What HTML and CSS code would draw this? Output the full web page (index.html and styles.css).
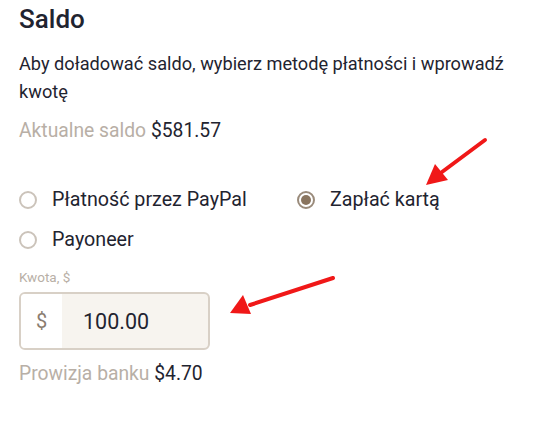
FILE: index.html
```html
<!DOCTYPE html>
<html lang="pl">
<head>
    <meta charset="UTF-8">
    <meta name="viewport" content="width=device-width, initial-scale=1.0">
    <title>Saldo</title>
    <link rel="stylesheet" href="styles.css">
</head>
<body>
    <div class="panel">
        <h2 class="panel-title">Saldo</h2>
        <p class="intro">Aby doładować saldo, wybierz metodę płatności i wprowadź kwotę</p>
        <p class="stat">Aktualne saldo <span class="stat-value">$581.57</span></p>

        <div class="methods">
            <label class="method">
                <span class="radio"></span>
                Płatność przez PayPal
            </label>
            <label class="method">
                <span class="radio checked"></span>
                Zapłać kartą
            </label>
            <label class="method">
                <span class="radio"></span>
                Payoneer
            </label>
        </div>

        <div class="field">
            <span class="field-label">Kwota, $</span>
            <div class="amount">
                <span class="amount-prefix">$</span>
                <span class="amount-value">100.00</span>
            </div>
        </div>

        <p class="stat fee">Prowizja banku <span class="stat-value">$4.70</span></p>

        <svg class="arrows" width="548" height="427" viewBox="0 0 548 427">
            <line x1="485" y1="140" x2="442" y2="172" stroke="#f01818" stroke-width="4" stroke-linecap="round"/>
            <polygon points="426,185 435,164 448,180" fill="#f01818"/>
            <line x1="333" y1="278" x2="250" y2="305" stroke="#f01818" stroke-width="4" stroke-linecap="round"/>
            <polygon points="230,313 243,295 251,314" fill="#f01818"/>
        </svg>
    </div>
</body>
</html>
```

FILE: styles.css
```css
body {
    margin: 0;
    background-color: #ffffff;
    font-family: Roboto, "Liberation Sans", sans-serif;
    color: #1f2430;
}

.panel {
    padding: 4px 19px 20px;
}

.panel-title {
    font-size: 26px;
    font-weight: 500;
    margin: 0 0 16px;
    line-height: 30px;
}

.intro {
    font-size: 18.2px;
    line-height: 28px;
    margin: 0 0 12px;
}

.stat {
    font-size: 19.3px;
    line-height: 26px;
    margin: 0;
    color: #b8afa6;
}

.stat-value {
    color: #1f2430;
}

.methods {
    display: grid;
    grid-template-columns: 278px auto;
    row-gap: 14px;
    margin-top: 43px;
}

.method {
    display: flex;
    align-items: center;
    gap: 15px;
    font-size: 19.7px;
    line-height: 26px;
}

.radio {
    width: 18px;
    height: 18px;
    box-sizing: border-box;
    border: 2px solid #cbc3ba;
    border-radius: 50%;
    display: flex;
    align-items: center;
    justify-content: center;
}

.radio.checked {
    border-color: #9a8b7b;
}

.radio.checked::after {
    content: "";
    width: 10px;
    height: 10px;
    border-radius: 50%;
    background-color: #8a755f;
}

.field {
    margin-top: 16px;
}

.field-label {
    display: block;
    font-size: 13.5px;
    line-height: 16px;
    color: #b8afa6;
    margin-bottom: 7px;
}

.amount {
    display: flex;
    width: 191px;
    height: 58px;
    box-sizing: border-box;
    border: 2px solid #d8d0c6;
    border-radius: 6px;
    overflow: hidden;
    background-color: #f7f4ef;
}

.amount-prefix {
    width: 41px;
    background-color: #ffffff;
    display: flex;
    align-items: center;
    justify-content: center;
    font-size: 20px;
    color: #8a7d70;
}

.amount-value {
    display: flex;
    align-items: center;
    padding-left: 21px;
    font-size: 21.5px;
    color: #1f2430;
}

.fee {
    margin-top: 11px;
}

.arrows {
    position: absolute;
    left: 0;
    top: 0;
    pointer-events: none;
}
```
